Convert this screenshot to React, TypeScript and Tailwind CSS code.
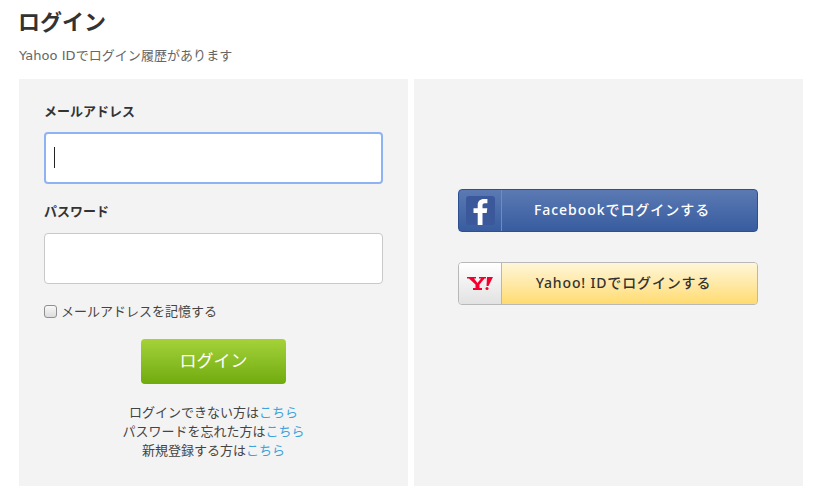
export default function App() {
  const btn = "font-['Noto_Sans','Noto_Sans_CJK_JP',sans-serif]";
  return (
    <div className="w-[820px] h-[488px] overflow-hidden bg-white pl-[19px] text-[#333] font-['DejaVu_Sans','Noto_Sans_CJK_JP',sans-serif]">
      <h1 className="h-[44px] pt-[4px] text-[22px] leading-[33px] font-bold text-[#333] -ml-[1px] font-['Noto_Sans_CJK_JP',sans-serif]">ログイン</h1>
      <p className="h-[35px] pt-[2px] text-[13px] leading-[20px] tracking-[0.05px] text-[#666]">Yahoo IDでログイン履歴があります</p>
      <div className="flex gap-[6px] w-[784px] h-[407px]">
        <div className="w-[389px] bg-[#f3f3f3] pt-[23px] px-[25px]">
          <label className="block text-[13px] leading-[20px] font-bold text-[#333]">メールアドレス</label>
          <div className="mt-[10px] h-[52px] w-[339px] rounded-[4px] border-2 border-[#8fb3f2] bg-white pl-[8px] pt-[13px]">
            <div className="w-[1px] h-[21px] bg-[#222]" />
          </div>
          <label className="block mt-[18px] text-[13px] leading-[20px] font-bold text-[#333]">パスワード</label>
          <div className="mt-[11px] h-[51px] w-[339px] rounded-[4px] border border-[#c8c8c8] bg-white" />
          <div className="mt-[17px] flex items-center h-[20px]">
            <span className="w-[13px] h-[13px] rounded-[3px] border border-[#8f8f8f] bg-linear-to-b from-[#f8f8f8] to-[#dcdcdc]" />
            <span className="ml-[4px] pt-[1px] text-[13px] leading-[20px] text-[#444]">メールアドレスを記憶する</span>
          </div>
          <div className="mt-[18px] flex justify-center">
            <div className="w-[145px] h-[45px] rounded-[4px] bg-linear-to-b from-[#a5d238] to-[#70ab0b] flex items-center justify-center text-[17px] text-white">ログイン</div>
          </div>
          <div className="mt-[19px] text-center text-[13px] leading-[19px] text-[#444]">
            <p>ログインできない方は<span className="text-[#3ea3dc]">こちら</span></p>
            <p>パスワードを忘れた方は<span className="text-[#3ea3dc]">こちら</span></p>
            <p>新規登録する方は<span className="text-[#3ea3dc]">こちら</span></p>
          </div>
        </div>
        <div className="w-[389px] bg-[#f3f3f3] flex flex-col pl-[44px] pt-[110px] gap-[30px]">
          <div className="w-[300px] h-[43px] rounded-[4px] border border-[#2f5090] bg-linear-to-b from-[#5b7ab4] to-[#385c9f] flex overflow-hidden">
            <div className="w-[43px] shrink-0 border-r border-[#6f8cc0] flex items-center justify-center">
              <div className="w-[29px] h-[29px] rounded-[3px] bg-[#3b589b] overflow-hidden">
                <svg viewBox="0 0 29 29" className="w-[29px] h-[29px]"><path fill="#fff" d="M16.5 29V17h4.2l.6-4.7h-4.8V9.6c0-1.4.4-2.3 2.4-2.3h2.5V3.1c-.5-.1-2-.2-3.6-.2-3.6 0-6.1 2.2-6.1 6.2v3.2H7.5V17h4.2v12z" /></svg>
              </div>
            </div>
            <div className={`flex-1 flex items-center justify-center pr-[15px] pb-[2px] text-[14px] font-medium tracking-[0.95px] text-white ${btn}`}>Facebookでログインする</div>
          </div>
          <div className="w-[300px] h-[43px] rounded-[4px] border border-[#b8b8b8] flex overflow-hidden">
            <div className="w-[43px] shrink-0 border-r border-[#b8b8b8] bg-linear-to-b from-[#ffffff] to-[#e2e2e2] flex items-center justify-center">
              <svg viewBox="0 0 26 13" className="w-[26px] h-[13px]">
                <path fill="#f5002e" d="M0 0H9V1.5H7L10.5 6 14 1.5H12V0H19V1.5H17.5L12.5 7.5V11H15V13H6V11H8.5V7.5L2 1.5H0Z" />
                <path fill="#f5002e" d="M20 0H26L21.5 9H19.5Z" />
                <circle cx="20" cy="11.5" r="1.5" fill="#f5002e" />
              </svg>
            </div>
            <div className={`flex-1 bg-linear-to-b from-[#fff6d8] to-[#ffdb6e] flex items-center justify-center pr-[12px] pb-[2px] text-[14px] font-medium tracking-[0.85px] text-[#333] ${btn}`}>Yahoo! IDでログインする</div>
          </div>
        </div>
      </div>
    </div>
  );
}
